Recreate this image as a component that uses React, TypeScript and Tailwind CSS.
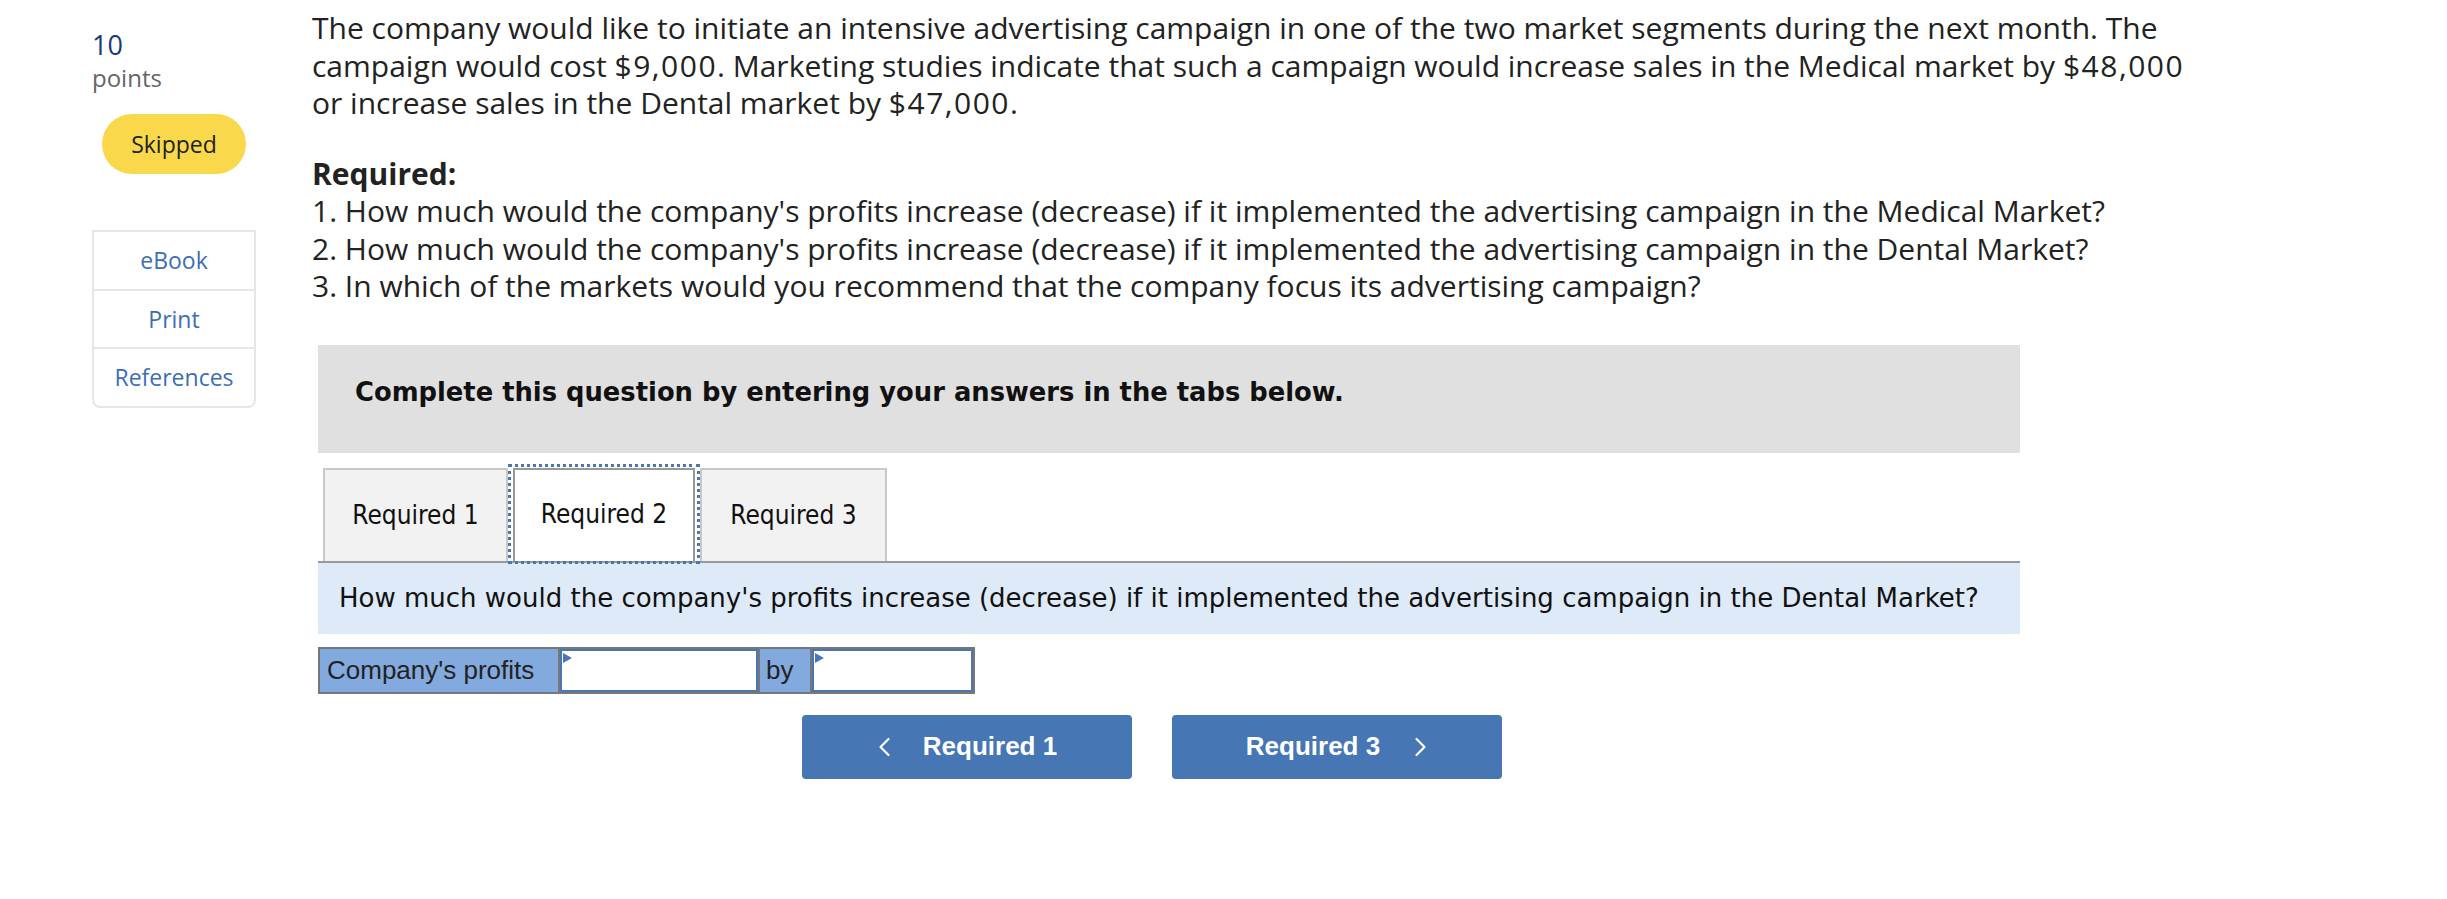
import React from "react";

// money figures in the reference font are set a little wider than the body face
const Money = ({ children }: { children: React.ReactNode }) => (
  <span className="tracking-[1.5px]">{children}</span>
);

const required = [
  "1. How much would the company's profits increase (decrease) if it implemented the advertising campaign in the Medical Market?",
  "2. How much would the company's profits increase (decrease) if it implemented the advertising campaign in the Dental Market?",
  "3. In which of the markets would you recommend that the company focus its advertising campaign?",
];

function Chevron({ dir }: { dir: "left" | "right" }) {
  return (
    <svg width="14" height="20" viewBox="0 0 14 20" fill="none" className="shrink-0">
      <path
        d={dir === "left" ? "M11.5 2 L3.5 10 L11.5 18" : "M2.5 2 L10.5 10 L2.5 18"}
        stroke="white"
        strokeWidth="2.2"
        strokeLinecap="round"
        strokeLinejoin="round"
      />
    </svg>
  );
}

function AnswerBox() {
  return (
    <div className="relative h-full w-full border-2 border-[#4a77b4] bg-white">
      <span className="absolute left-[1px] top-[2px] h-0 w-0 border-y-[5px] border-l-[9px] border-y-transparent border-l-[#4a77b4]" />
    </div>
  );
}

export default function App() {
  return (
    <div className="min-h-[899px] w-full bg-white text-[#222]">
      <div className="flex pl-[92px]">
        {/* left rail */}
        <aside className="w-[164px] shrink-0 pt-[28px] font-['Open_Sans',sans-serif]">
          <div className="text-[27px] leading-[33px] text-[#1a3a73]">10</div>
          <div className="text-[24px] leading-[33px] text-[#666]">points</div>

          <div className="mt-[20px] flex justify-center">
            <div className="flex h-[60px] w-[144px] items-center justify-center rounded-full bg-[#f9d84b] text-[23px] text-[#222]">
              Skipped
            </div>
          </div>

          <div className="mt-[56px] rounded-b-[8px] border-2 border-[#e6e6e6] text-[23px] text-[#3d6eb4]">
            <div className="flex h-[59px] items-center justify-center border-b-2 border-[#e6e6e6]">eBook</div>
            <div className="flex h-[58px] items-center justify-center border-b-2 border-[#e6e6e6]">Print</div>
            <div className="flex h-[57px] items-center justify-center">References</div>
          </div>
        </aside>

        {/* question body */}
        <main className="ml-[56px] pt-[9px]">
          <div className="font-['Open_Sans',sans-serif] text-[30px] leading-[37.5px]">
            <div className="mb-[33px] whitespace-nowrap">
              <div>
                The company would like to initiate an intensive advertising campaign in one of the two market segments during the next month. The
              </div>
              <div>
                campaign would cost <Money>$9,000</Money>. Marketing studies indicate that such a campaign would increase sales in the Medical market by <Money>$48,000</Money>
              </div>
              <div>
                or increase sales in the Dental market by <Money>$47,000</Money>.
              </div>
            </div>
            <div className="font-bold">Required:</div>
            {required.map((line) => (
              <div key={line} className="whitespace-nowrap">
                {line}
              </div>
            ))}
          </div>

          <div className="ml-[6px] w-[1702px]">
            <div className="mt-[40px] h-[108px] bg-[#e0e0e0] pl-[37px] pt-[33px] font-['DejaVu_Sans',sans-serif] text-[25.8px] font-bold leading-[28px] text-[#111]">
              Complete this question by entering your answers in the tabs below.
            </div>

            {/* tabs */}
            <div className="mt-[11px] flex items-end pl-[5px] font-['DejaVu_Sans_Condensed','DejaVu_Sans',sans-serif] text-[26px] text-[#111]">
              <div className="flex h-[93px] w-[185px] items-center justify-center border-2 border-b-0 border-[#c8c8c8] bg-[#f2f2f2]">
                Required 1
              </div>
              <div className="relative z-10 -mb-[3px] h-[100px] w-[192px] border-[3px] border-dotted border-[#4a77b4] px-[2px] pt-[1px]">
                <div className="flex h-full items-center justify-center border-2 border-b-0 border-[#999] bg-white pb-[1px]">
                  Required 2
                </div>
              </div>
              <div className="flex h-[93px] w-[187px] items-center justify-center border-2 border-b-0 border-[#c8c8c8] bg-[#f2f2f2]">
                Required 3
              </div>
            </div>

            <div className="flex h-[73px] items-center border-t-2 border-[#999] bg-[#deeaf7] pl-[21px] font-['DejaVu_Sans',sans-serif] text-[26px] text-[#111]">
              How much would the company's profits increase (decrease) if it implemented the advertising campaign in the Dental Market?
            </div>

            {/* answer row */}
            <div className="mt-[13px] flex h-[47px] w-[657px] border-2 border-[#777] font-['Liberation_Sans',sans-serif] text-[26px] text-[#222]">
              <div className="flex w-[238px] items-center bg-[#82aadf] pl-[7px]">Company's profits</div>
              <div className="w-[200px] border-l-2 border-[#777]">
                <AnswerBox />
              </div>
              <div className="flex w-[52px] items-center border-l-2 border-[#777] bg-[#82aadf] pl-[6px]">by</div>
              <div className="flex-1 border-l-2 border-[#777]">
                <AnswerBox />
              </div>
            </div>
          </div>

          {/* nav buttons */}
          <div className="ml-[490px] mt-[21px] flex gap-[40px] font-['Liberation_Sans',sans-serif] text-[26px] font-bold text-white">
            <button className="flex h-[64px] w-[330px] items-center justify-center gap-[32px] rounded-[4px] bg-[#4676b3]">
              <Chevron dir="left" />
              <span>Required 1</span>
            </button>
            <button className="flex h-[64px] w-[330px] items-center justify-center gap-[34px] rounded-[4px] bg-[#4676b3]">
              <span>Required 3</span>
              <Chevron dir="right" />
            </button>
          </div>
        </main>
      </div>
    </div>
  );
}
